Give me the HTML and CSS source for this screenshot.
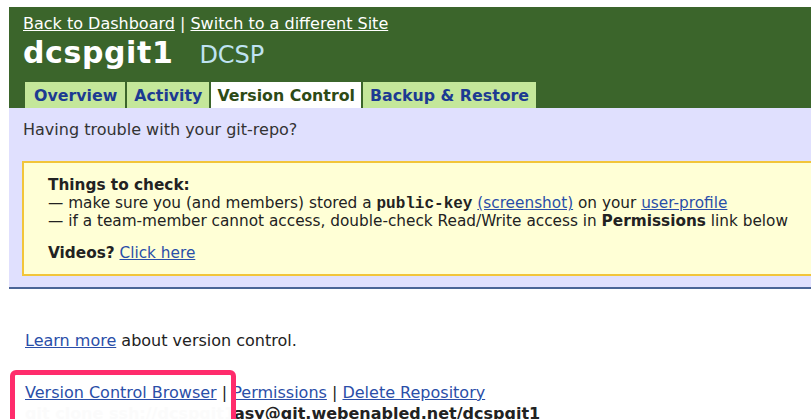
FILE: index.html
```html
<!DOCTYPE html>
<html>
<head>
<meta charset="utf-8">
<title>dcspgit1 - Version Control</title>
<link rel="stylesheet" href="styles.css">
</head>
<body>
<div class="page">
  <div class="site-head">
    <div class="crumbs"><a href="#">Back to Dashboard</a> | <a href="#">Switch to a different Site</a></div>
    <div class="site-title"><span class="site-name">dcspgit1</span><span class="site-org">DCSP</span></div>
    <div class="tabs">
      <a class="tab" href="#">Overview</a>
      <a class="tab" href="#">Activity</a>
      <a class="tab active" href="#">Version Control</a>
      <a class="tab" href="#">Backup &amp; Restore</a>
    </div>
  </div>
  <div class="help-panel">
    <p class="help-intro">Having trouble with your git-repo?</p>
    <div class="notice">
      <div class="notice-title">Things to check:</div>
      <div>— make sure you (and members) stored a <code>public-key</code> <a href="#">(screenshot)</a> on your <a href="#">user-profile</a></div>
      <div>— if a team-member cannot access, double-check Read/Write access in <b>Permissions</b> link below</div>
      <div class="videos"><b>Videos?</b> <a href="#">Click here</a></div>
    </div>
  </div>
  <div class="content">
    <p class="learn"><a href="#">Learn more</a> about version control.</p>
    <div class="actions">
      <div class="action-links"><a href="#">Version Control Browser</a> | <a href="#">Permissions</a> | <a href="#">Delete Repository</a></div>
      <div class="clone-url"><span class="faded">git clone ssh://dcspgit1-e</span>asy@git.webenabled.net/dcspgit1</div>
      <div class="highlight"></div>
    </div>
  </div>
</div>
</body>
</html>
```

FILE: styles.css
```css
html, body {
  margin: 0;
  padding: 0;
  background: #fff;
}

body {
  font-family: "DejaVu Sans", Verdana, sans-serif;
  font-size: 16px;
  color: #222;
  overflow: hidden;
}

a {
  color: #2a4ea8;
  text-decoration: underline;
}

.page {
  padding: 7px 0 0 9px;
}

/* green site header with tabs */
.site-head {
  background: #3b652b;
  padding: 7px 0 0 14px;
}

.crumbs {
  color: #fff;
  font-size: 16px;
  line-height: 20px;
  white-space: nowrap;
}

.crumbs a {
  color: #fff;
}

.site-title {
  display: flex;
  align-items: baseline;
  margin-top: 2px;
  height: 46px;
  line-height: 34px;
}

.site-name {
  color: #fff;
  font-size: 30px;
  font-weight: bold;
  letter-spacing: 0.6px;
}

.site-org {
  color: #bfe3f2;
  font-size: 24px;
  margin-left: 26px;
}

.tabs {
  display: flex;
  gap: 2px;
  padding-left: 2px;
}

.tab {
  background: #c4e79a;
  color: #1c3a92;
  font-weight: bold;
  font-size: 15.8px;
  line-height: 24px;
  padding: 2px 7px 0 7px;
  text-decoration: none;
  white-space: nowrap;
}

.tab:first-child {
  padding: 2px 8px 0 9px;
}

.tab.active {
  background: #fff;
  color: #2d4a15;
  padding: 2px 6px 0 6px;
}

/* lavender help panel */
.help-panel {
  background: #e0e0fe;
  border-bottom: 2px solid #4b6597;
  padding: 12px 0 11px 13px;
}

.help-intro {
  margin: 0 0 21px 1px;
  line-height: 20px;
  color: #333;
}

.notice {
  background: #ffffd6;
  border: 2px solid #f2c53a;
  border-right: none;
  padding: 13px 0 12px 24px;
  font-size: 15.3px;
  line-height: 18px;
  color: #222;
  white-space: nowrap;
}

.notice-title {
  font-weight: bold;
}

.notice code {
  font-family: "Liberation Mono", "Courier New", monospace;
  font-weight: bold;
  font-size: 16px;
  line-height: 16px;
}

.videos {
  margin-top: 14px;
}

/* links below the panel */
.content {
  padding: 42px 0 0 16px;
}

.learn {
  margin: 0 0 33px 0;
  line-height: 20px;
}

.actions {
  position: relative;
  line-height: 18px;
}

.clone-url {
  margin-top: 3px;
  font-weight: bold;
  color: #222;
  white-space: nowrap;
}

.faded {
  display: inline-block;
  width: 209px;
  overflow: hidden;
  vertical-align: top;
  color: #fbfbfb;
}

.highlight {
  position: absolute;
  left: -15px;
  top: -14px;
  width: 216px;
  height: 60px;
  border: 5px solid #ff2c6c;
  border-radius: 6px;
}
```
